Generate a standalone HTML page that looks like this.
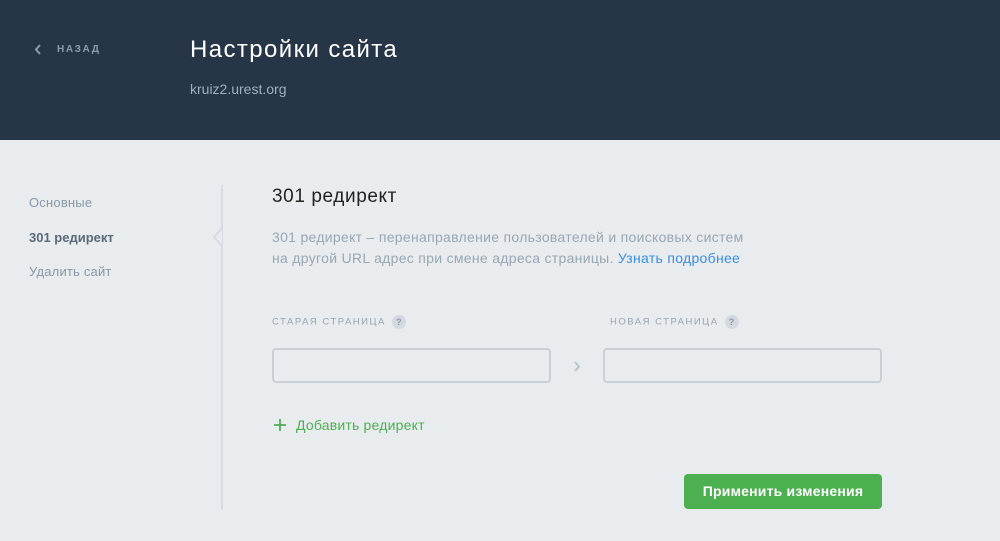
<!DOCTYPE html>
<html><head><meta charset="utf-8"><style>
*{margin:0;padding:0;box-sizing:border-box}
body{width:1000px;height:541px;background:#e8ecef;font-family:"Liberation Sans",sans-serif;position:relative;overflow:hidden}
.hdr{position:absolute;left:0;top:0;width:1000px;height:140px;background:#263646}
.abs{position:absolute;white-space:nowrap}
.inp{position:absolute;height:35px;border:2px solid #c9d0d5;border-radius:4px;background:#e8ecef}
.q{display:inline-block;width:14px;height:14px;border-radius:50%;background:#d3d9de;color:#8a97a3;font-size:9px;text-align:center;line-height:14px;font-weight:bold;margin-left:6px;vertical-align:middle;letter-spacing:0}
</style></head><body>
<div class="hdr"></div>
<svg class="abs" style="left:34px;top:44px" width="8" height="11"><path d="M6 1L2 5.5L6 10" stroke="#8a9db0" stroke-width="2" fill="none"/></svg>
<div class="abs" style="left:57px;top:44px;color:#8a9db0;font-size:10px;font-weight:bold;letter-spacing:1.6px">НАЗАД</div>
<div class="abs" style="left:190px;top:36px;color:#fff;font-size:24px;letter-spacing:1.4px">Настройки сайта</div>
<div class="abs" style="left:190px;top:81px;color:#9fb0bf;font-size:14px">kruiz2.urest.org</div>
<div class="abs" style="left:29px;top:195px;color:#8a97a3;font-size:13px;letter-spacing:0.2px">Основные</div>
<div class="abs" style="left:29px;top:230px;color:#5b6a78;font-size:13px;font-weight:bold">301 редирект</div>
<div class="abs" style="left:29px;top:264px;color:#8a97a3;font-size:13px;letter-spacing:0.2px">Удалить сайт</div>
<div class="abs" style="left:221px;top:185px;width:2px;height:325px;background:#d5dbe0"></div>
<svg class="abs" style="left:212px;top:228px" width="12" height="18"><path d="M10 0L2 9L10 18" stroke="#d5dbe0" stroke-width="2" fill="#e8ecef"/></svg>
<div class="abs" style="left:272px;top:186px;color:#222;font-size:19px;letter-spacing:0.6px">301 редирект</div>
<div class="abs" style="left:272px;top:227px;color:#9aa6b1;font-size:14px;line-height:21px;letter-spacing:0.3px">301 редирект – перенаправление пользователей и поисковых систем<br>на другой URL адрес при смене адреса страницы. <span style="color:#3a8ede">Узнать подробнее</span></div>
<div class="abs" style="left:272px;top:315px;color:#98a4ae;font-size:9.5px;letter-spacing:1.5px">СТАРАЯ СТРАНИЦА<span class="q">?</span></div>
<div class="abs" style="left:610px;top:315px;color:#98a4ae;font-size:9.5px;letter-spacing:1.5px">НОВАЯ СТРАНИЦА<span class="q">?</span></div>
<div class="inp" style="left:272px;top:348px;width:279px"></div>
<div class="inp" style="left:603px;top:348px;width:279px"></div>
<svg class="abs" style="left:573px;top:361px" width="8" height="11"><path d="M2 1L6 5.5L2 10" stroke="#b8c1c8" stroke-width="1.8" fill="none"/></svg>
<svg class="abs" style="left:274px;top:419px" width="12" height="12"><path d="M6 0V12M0 6H12" stroke="#4caf50" stroke-width="1.8"/></svg>
<div class="abs" style="left:296px;top:417px;color:#4caf50;font-size:14px;letter-spacing:0.2px">Добавить редирект</div>
<div class="abs" style="left:684px;top:474px;width:198px;height:35px;background:#4caf50;border-radius:4px;color:#fff;font-size:14px;font-weight:bold;text-align:center;line-height:35px;letter-spacing:0.2px">Применить изменения</div>
</body></html>
